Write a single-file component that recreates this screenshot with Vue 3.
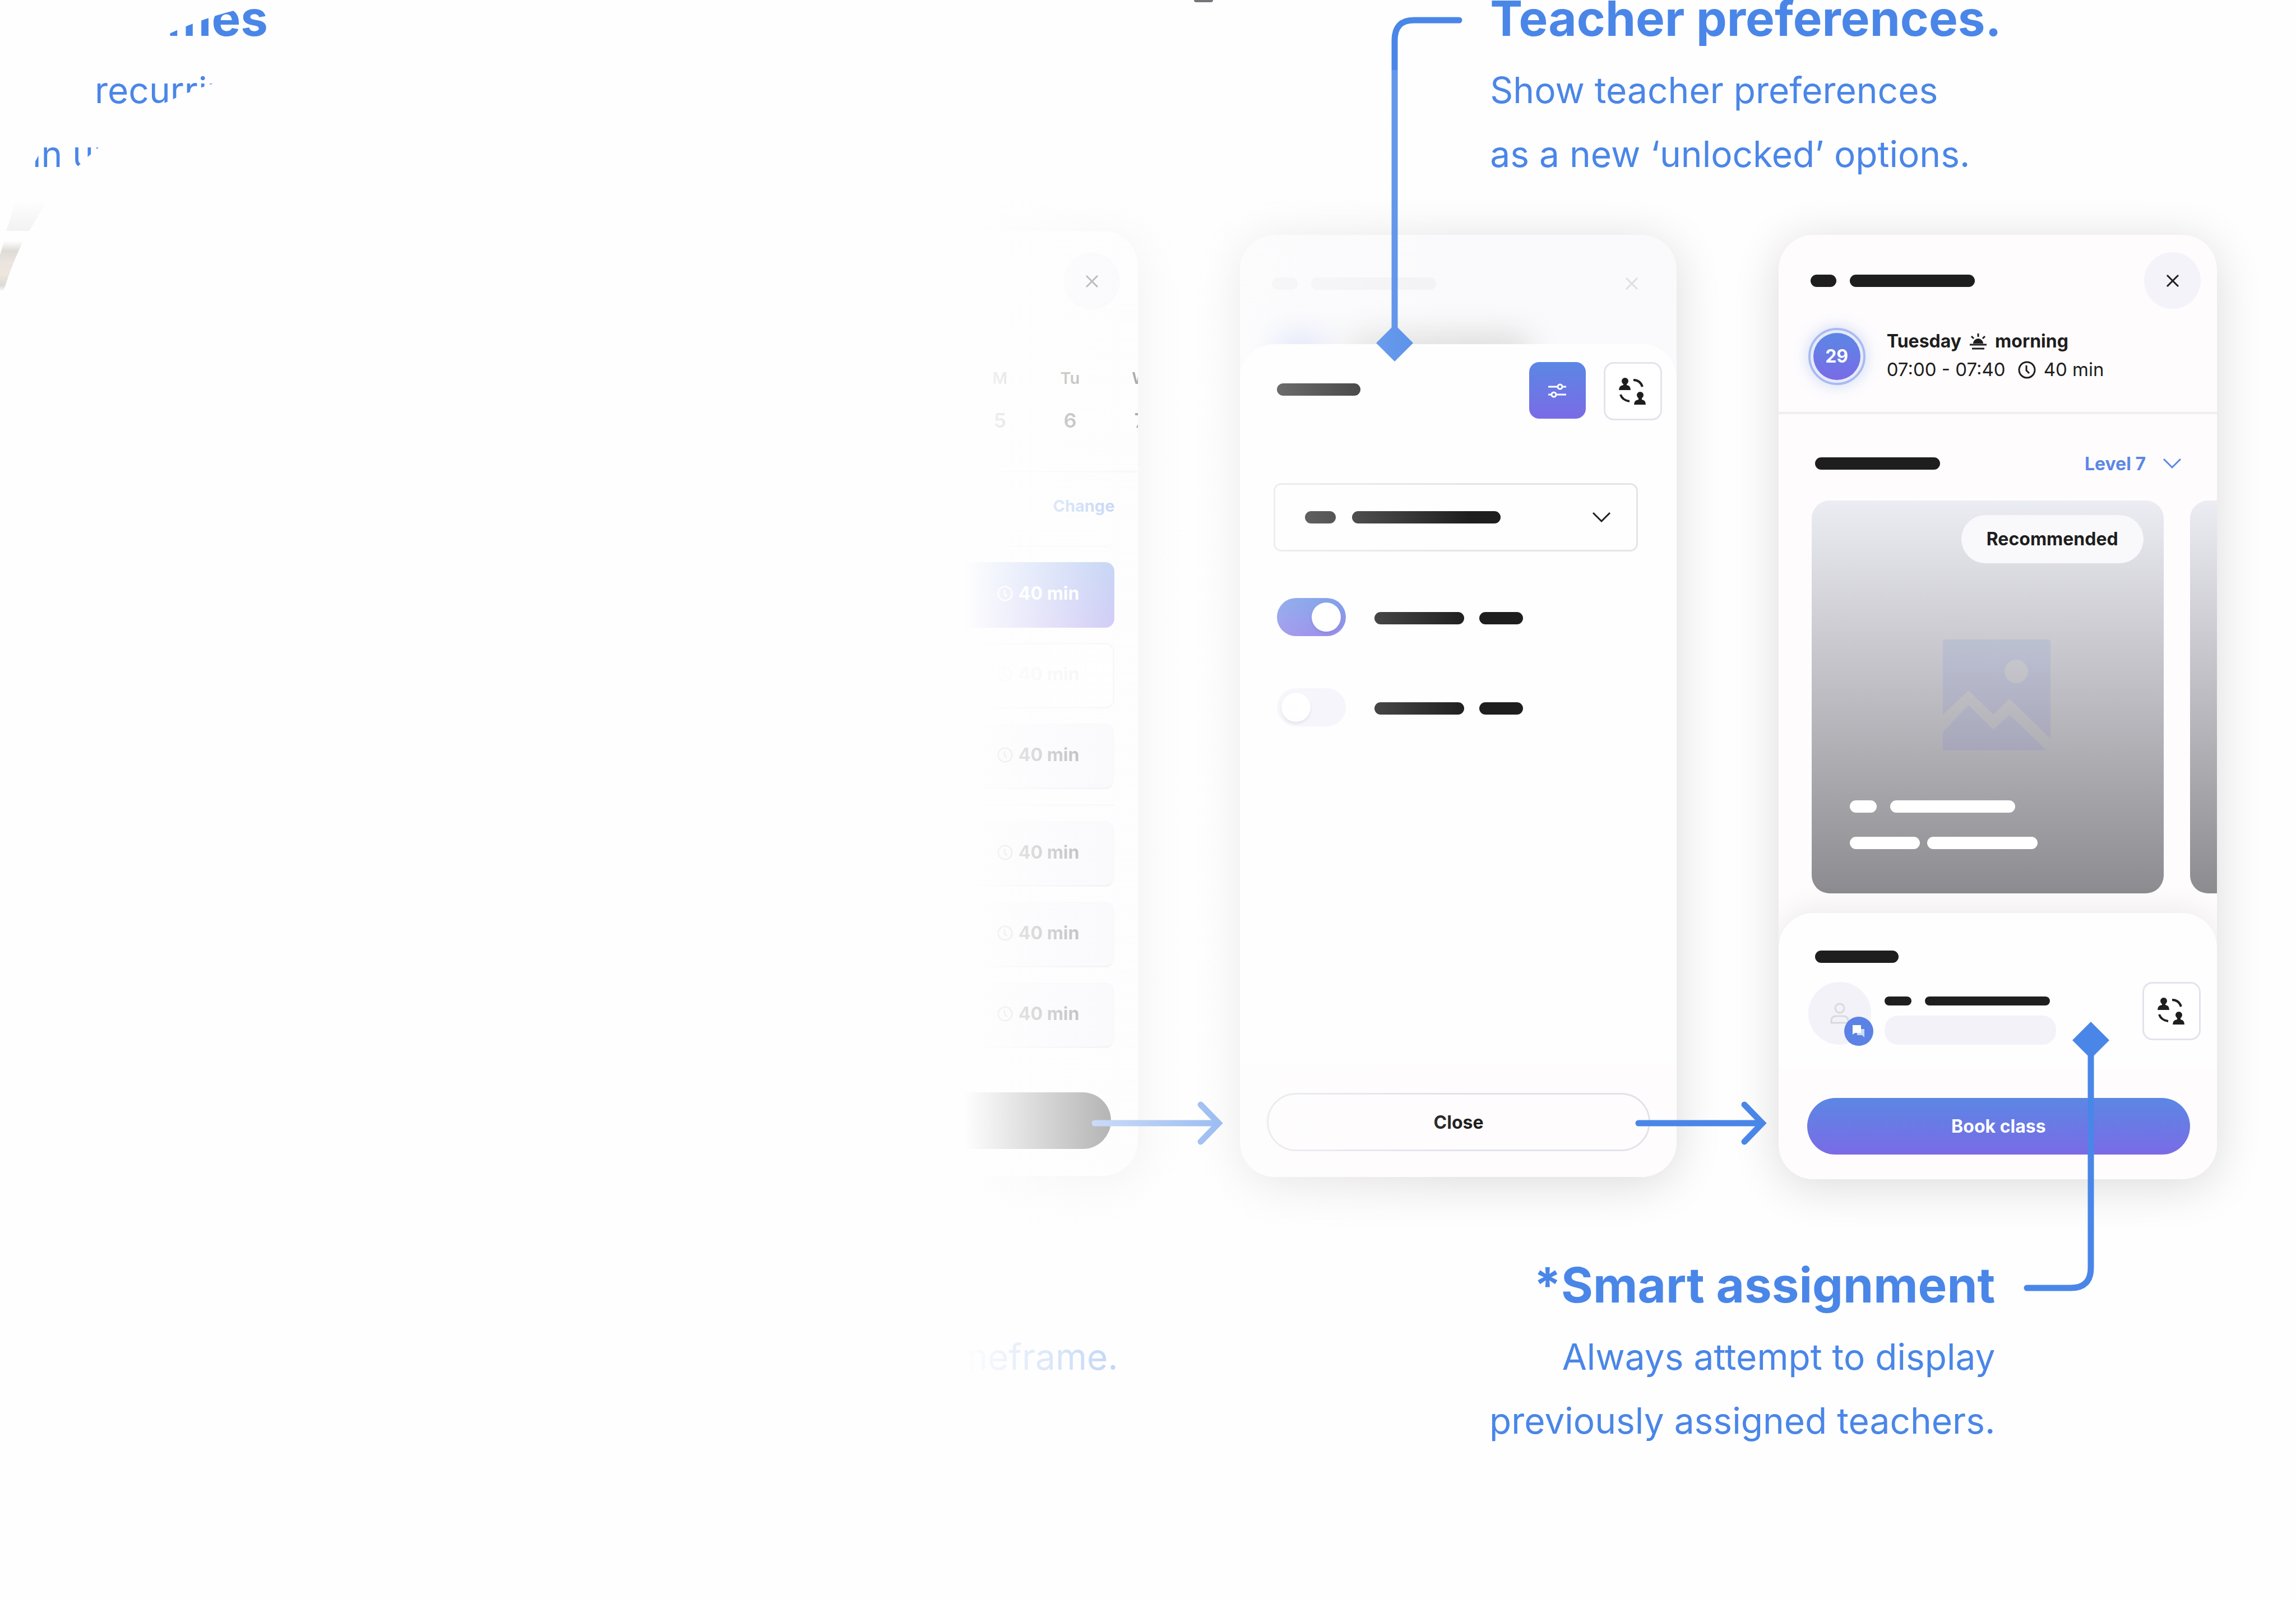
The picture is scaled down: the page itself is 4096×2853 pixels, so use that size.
<script setup>
import { ref } from 'vue'

const days = [
  { name: 'M', date: 5 },
  { name: 'Tu', date: 6 },
  { name: 'W', date: 7 },
]
const morningSlots = [
  { id: 1, kind: 'active' },
  { id: 2, kind: 'taken' },
  { id: 3, kind: 'free' },
]
const afternoonSlots = [
  { id: 4, kind: 'free' },
  { id: 5, kind: 'free' },
  { id: 6, kind: 'free' },
]
const options = ref([
  { id: 'option-a', on: true },
  { id: 'option-b', on: false },
])
</script>

<template>
  <main class="board">
    <!-- Upper captions -->
    <section class="captions captions-top">
      <div class="caption caption-preferences">
        <h2>Teacher preferences.</h2>
        <p>Show teacher preferences<br />as a new ‘unlocked’ options.</p>
      </div>
    </section>

    <!-- Screens of the booking flow -->
    <section class="screens">
      <article class="phone phone-slots">
        <header class="phone-header">
          <button class="round-button" type="button" aria-label="Close">
            <svg viewBox="0 0 24 24"><path d="M2 2L22 22M22 2L2 22" /></svg>
          </button>
        </header>
        <div class="days">
          <div v-for="day in days" :key="day.name" class="day">
            <span class="day-name">{{ day.name }}</span>
            <span class="day-date">{{ day.date }}</span>
          </div>
        </div>
        <div class="change-row"><a href="#">Change</a></div>
        <div class="slots">
          <button v-for="slot in morningSlots" :key="slot.id" type="button" class="slot" :class="slot.kind">
            <svg class="clock" viewBox="0 0 32 32"><circle cx="16" cy="16" r="14" /><path d="M15 8V17L20 22" /></svg>
            40 min
          </button>
          <hr />
          <button v-for="slot in afternoonSlots" :key="slot.id" type="button" class="slot" :class="slot.kind">
            <svg class="clock" viewBox="0 0 32 32"><circle cx="16" cy="16" r="14" /><path d="M15 8V17L20 22" /></svg>
            40 min
          </button>
        </div>
        <footer class="phone-footer">
          <button class="wide-button dark" type="button" aria-label="Continue"></button>
        </footer>
      </article>

      <article class="phone phone-preferences">
        <header class="phone-header">
          <span class="bar short"></span>
          <span class="bar long"></span>
          <button class="round-button" type="button" aria-label="Close">
            <svg viewBox="0 0 24 24"><path d="M2 2L22 22M22 2L2 22" /></svg>
          </button>
        </header>
        <div class="haze"><span class="haze-blue"></span><span class="haze-gray"></span></div>
        <div class="sheet">
          <div class="sheet-header">
            <span class="bar title"></span>
            <button class="square-button filled" type="button" aria-label="Preferences">
              <svg class="sliders" viewBox="0 0 32 26">
                <path d="M1 6H16M27 6H31M1 20H5M16 20H31" />
                <circle cx="21" cy="6" r="4" /><circle cx="10" cy="20" r="4" />
              </svg>
            </button>
            <button class="square-button" type="button" aria-label="Change teacher">
              <svg class="swap" viewBox="0 0 50 48">
                <circle cx="11" cy="6" r="6" /><path d="M8 8H14V13Q21 14 21 22H0Q0 14 8 13Z" />
                <circle cx="38" cy="31" r="6" /><path d="M35 33H41V39Q48 40 48 48H27Q27 40 35 39Z" />
                <path class="arc" d="M26 4Q38 4 42 16M3 30Q6 40 19 42" />
              </svg>
            </button>
          </div>
          <label class="picker">
            <span class="bar picker-short"></span>
            <span class="bar picker-long"></span>
            <svg class="chevron" viewBox="0 0 34 20"><path d="M2 2L17 17L32 2" /></svg>
            <select aria-label="Language"><option></option></select>
          </label>
          <label v-for="option in options" :key="option.id" class="option">
            <input v-model="option.on" type="checkbox" :name="option.id" />
            <span class="bar option-long"></span>
            <span class="bar option-short"></span>
          </label>
        </div>
        <footer class="phone-footer">
          <button class="wide-button outlined" type="button">Close</button>
        </footer>
      </article>

      <article class="phone phone-booking">
        <header class="phone-header">
          <span class="bar short"></span>
          <span class="bar long"></span>
          <button class="round-button" type="button" aria-label="Close">
            <svg viewBox="0 0 24 24"><path d="M2 2L22 22M22 2L2 22" /></svg>
          </button>
        </header>
        <div class="lesson">
          <span class="date-ring"><span class="date">29</span></span>
          <div class="lesson-text">
            <div class="lesson-line strong">
              <span>Tuesday</span>
              <svg class="sunrise" viewBox="0 0 32 30">
                <path d="M7 19A9 9 0 0 1 25 19Z" />
                <path class="rays" d="M16 7V1M8 10L4 6M24 10L28 6M1 21H31M5 28H27" />
              </svg>
              <span>morning</span>
            </div>
            <div class="lesson-line">
              <span>07:00 - 07:40</span>
              <svg class="clock" viewBox="0 0 32 32"><circle cx="16" cy="16" r="14" /><path d="M15 8V17L20 22" /></svg>
              <span>40 min</span>
            </div>
          </div>
        </div>
        <div class="level-row">
          <span class="bar level-title"></span>
          <label class="level">
            <select aria-label="Level"><option>Level 7</option></select>
            <svg class="chevron" viewBox="0 0 34 20"><path d="M2 2L17 17L32 2" /></svg>
          </label>
        </div>
        <div class="cards">
          <div class="card">
            <span class="badge">Recommended</span>
            <svg class="picture" viewBox="0 0 192 198">
              <defs>
                <linearGradient id="pictureTint" x1="0" y1="0" x2="0" y2="1">
                  <stop offset="0" stop-color="#5b87e4" /><stop offset="1" stop-color="#7a6be6" />
                </linearGradient>
              </defs>
              <g fill="url(#pictureTint)">
                <path fill-rule="evenodd" d="M4 0H188Q192 0 192 4V177L119 106L90 134L46 91L0 134V4Q0 0 4 0ZM152 57A21 21 0 1 0 110 57A21 21 0 1 0 152 57Z" />
                <path d="M0 165L46 117L90 161L119 134L185 198H0Z" />
              </g>
            </svg>
            <div class="card-lines">
              <div class="card-line"><span class="bar w48"></span><span class="bar w223 gap24"></span></div>
              <div class="card-line"><span class="bar w125"></span><span class="bar w197 gap13"></span></div>
            </div>
          </div>
          <div class="card"></div>
        </div>
        <div class="teacher-sheet">
          <span class="bar title"></span>
          <div class="teacher">
            <span class="avatar">
              <svg class="person" viewBox="0 0 34 38"><circle cx="17" cy="10" r="8" /><path d="M2 36V32Q2 24 11 24H23Q32 24 32 32V36Z" /></svg>
              <span class="chat">
                <svg viewBox="0 0 24 24"><path class="back" d="M9 8H22V23L18 19H9Z" /><path d="M1 1H16V15H5L1 18Z" /></svg>
              </span>
            </span>
            <div class="teacher-text">
              <div class="teacher-name"><span class="bar thin w48"></span><span class="bar thin w223 gap24"></span></div>
              <span class="teacher-pill"></span>
            </div>
            <button class="square-button" type="button" aria-label="Change teacher">
              <svg class="swap" viewBox="0 0 50 48">
                <circle cx="11" cy="6" r="6" /><path d="M8 8H14V13Q21 14 21 22H0Q0 14 8 13Z" />
                <circle cx="38" cy="31" r="6" /><path d="M35 33H41V39Q48 40 48 48H27Q27 40 35 39Z" />
                <path class="arc" d="M26 4Q38 4 42 16M3 30Q6 40 19 42" />
              </svg>
            </button>
          </div>
        </div>
        <footer class="phone-footer">
          <button class="wide-button primary" type="button">Book class</button>
        </footer>
      </article>
    </section>

    <!-- Lower captions -->
    <section class="captions captions-bottom">
      <div class="caption caption-timeframe"><p>timeframe.</p></div>
      <div class="caption caption-assignment">
        <h2>*Smart assignment</h2>
        <p>Always attempt to display<br />previously assigned teachers.</p>
      </div>
    </section>

    <!-- Connectors between captions and screens -->
    <svg class="connectors" viewBox="0 0 4096 2853">
      <g class="wire">
        <path d="M2603 36H2522Q2488 36 2488 72V600" />
        <path d="M1953 2004H2174M2142 1971L2174 2004L2142 2037" />
        <path d="M2923 2004H3144M3112 1971L3144 2004L3112 2037" />
        <path d="M3730 1870V2262Q3730 2298 3694 2298H3616" />
      </g>
      <path class="diamond" d="M2488 579L2521 612L2488 645L2455 612ZM3730 1823L3763 1856L3730 1889L3697 1856Z" />
    </svg>

    <div class="fade"></div>

    <!-- Remains of the previous board, seen through a curved band -->
    <aside class="previous">
      <h2>times</h2>
      <p class="previous-first">recurring</p>
      <p class="previous-second">in up</p>
      <div class="previous-shade"></div>
      <div class="previous-photo"></div>
    </aside>
    <span class="ink"></span>
  </main>
</template>

<style>
body {
  margin: 0;
  background: #fefefe;
}
</style>

<style scoped>
* {
  box-sizing: border-box;
}
.board {
  position: relative;
  min-height: 100vh;
  overflow: hidden;
  background: #fefefe;
  color: #1e1e1e;
  font-family: Inter, "Liberation Sans", sans-serif;
  font-size: 32px;
}
button,
select {
  margin: 0;
  padding: 0;
  border: 0;
  background: none;
  color: inherit;
  font: inherit;
}
button {
  display: flex;
  align-items: center;
  justify-content: center;
  flex: none;
}
svg {
  display: block;
  flex: none;
  fill: none;
  stroke: none;
}
h2,
p {
  margin: 0;
  color: #4a86e8;
  white-space: nowrap;
}
h2 {
  font-size: 87px;
  font-weight: 700;
  line-height: 66px;
}
p {
  font-size: 64px;
  line-height: 114px;
}
.caption {
  display: flex;
  flex-direction: column;
  gap: 38px;
}
.captions-top {
  display: flex;
  height: 412px;
  padding-left: 64.9%;
}
.captions-bottom {
  display: grid;
  grid-template-columns: 48.7% 38.2%;
  padding: 156px 0 200px;
  text-align: right;
}
.caption-timeframe {
  padding-top: 104px;
}

/* Phones */
.screens {
  display: flex;
  justify-content: flex-end;
  gap: 182px;
}
.phone {
  display: flex;
  flex: 0 0 19%;
  flex-direction: column;
  overflow: hidden;
  border-radius: 62px;
  background: #fefcfd;
  box-shadow: 0 12px 84px rgba(0, 0, 0, 0.14);
}
.phone-slots {
  margin-bottom: 6px;
}
.phone-preferences {
  margin: 7px 0 4px;
  background: #fafafc;
}
.phone-booking {
  flex-basis: 19.1%;
  margin: 7px 141px 0 0;
}
.phone-header {
  display: flex;
  align-items: center;
  gap: 24px;
  padding: 31px 29px 0 57px;
}
.phone-slots .phone-header {
  padding: 39px 32px 0 57px;
}
.phone-preferences .phone-header {
  padding-top: 36px;
}
.bar {
  display: block;
  flex: none;
  height: 22px;
  border-radius: 11px;
  background: #1e1e1e;
}
.bar.short {
  width: 46px;
}
.bar.long {
  width: 223px;
}
.bar.title {
  width: 149px;
}
.bar.thin {
  height: 16px;
  border-radius: 8px;
}
.w48 {
  width: 48px;
}
.w125 {
  width: 125px;
}
.w197 {
  width: 197px;
}
.w223 {
  width: 223px;
}
.gap24 {
  margin-left: 24px;
}
.gap13 {
  margin-left: 13px;
}
.phone-preferences .phone-header .bar {
  background: #f2f2f4;
}
.round-button {
  width: 101px;
  height: 101px;
  margin-left: auto;
  border-radius: 50%;
  background: #f3f3f9;
}
.round-button svg {
  width: 24px;
  height: 24px;
  stroke: #1e1e1e;
  stroke-width: 3;
}
.phone-preferences .round-button {
  background: none;
}
.phone-preferences .round-button svg {
  stroke: #dfdfe3;
}
.phone-footer {
  padding: 53px 48px 44px 51px;
}
.wide-button {
  width: 100%;
  height: 101px;
  border-radius: 51px;
  font-weight: 700;
}
.dark {
  background: #1e1e1e;
}
.outlined {
  height: 104px;
  border: 3px solid #e2e2ea;
  border-radius: 52px;
}
.primary {
  background: linear-gradient(#5b87e4, #7a6be6);
  color: #fff;
}
.square-button {
  width: 104px;
  height: 104px;
  border: 3px solid #e4e3ec;
  border-radius: 18px;
  background: #fff;
}
.filled {
  width: 101px;
  height: 101px;
  border: 0;
  background: linear-gradient(#5b87e4, #7a6be6);
}
.sliders {
  width: 32px;
  height: 26px;
  stroke: #fff;
  stroke-width: 3;
  stroke-linecap: round;
}
.swap {
  width: 50px;
  height: 48px;
  fill: #1e1e1e;
}
.swap .arc {
  fill: none;
  stroke: #1e1e1e;
  stroke-width: 4;
}
.chevron {
  width: 34px;
  height: 20px;
  stroke: currentColor;
  stroke-width: 3;
}
.clock {
  width: 32px;
  height: 32px;
  stroke: currentColor;
  stroke-width: 3;
}

/* Time slots */
.days {
  display: flex;
  justify-content: flex-end;
  height: 291px;
  margin-right: -66px;
  padding-top: 103px;
  border-bottom: 3px solid #f3eff1;
}
.day {
  display: flex;
  flex: none;
  flex-direction: column;
  gap: 35px;
  width: 125px;
  line-height: 40px;
  text-align: center;
}
.day-name {
  font-size: 29px;
  font-weight: 600;
}
.day-date {
  font-size: 36px;
  font-weight: 600;
}
.change-row {
  margin: 0 42px;
  padding: 39px 0 50px;
  border-bottom: 3px solid #f0f0f2;
  border-radius: 0 0 16px 16px;
  line-height: 40px;
  text-align: right;
}
.change-row a {
  color: #5b8fe8;
  font-size: 29px;
  font-weight: 700;
  text-decoration: none;
}
.slots {
  display: flex;
  flex-direction: column;
  gap: 27px;
  padding: 27px 42px 0;
}
.slots hr {
  width: 100%;
  height: 3px;
  margin: 0;
  border: 0;
  background: #efeff2;
}
.slot {
  justify-content: flex-end;
  gap: 10px;
  height: 117px;
  padding: 0 60px 6px 0;
  border: 3px solid #f0f0f8;
  border-radius: 16px;
  background: #f1f1fa;
  font-weight: 700;
}
.slot .clock {
  width: 28px;
  height: 28px;
  opacity: 0.6;
}
.slot.free {
  border-bottom-color: #dddde8;
}
.slot.active {
  border-color: transparent;
  background: linear-gradient(#5b87e4, #7a6be6) border-box;
  color: #fff;
}
.slot.taken {
  border-color: #ececf2;
  background: #fff;
  color: #e4e4ee;
}
.slot.taken .clock,
.slot.active .clock {
  opacity: 1;
}
.phone-slots .phone-footer {
  margin-top: auto;
  padding-bottom: 48px;
}

/* Preferences */
.haze {
  position: relative;
  height: 58px;
}
.haze-blue,
.haze-gray {
  position: absolute;
  top: 40px;
  height: 60px;
  border-radius: 30px;
  filter: blur(26px);
}
.haze-blue {
  left: 60px;
  width: 96px;
  background: #d3d9f7;
}
.haze-gray {
  left: 190px;
  width: 330px;
  background: #dcdcdc;
}
.sheet {
  position: relative;
  flex: 1;
  padding: 32px 0 0;
  border-radius: 62px 62px 0 0;
  background: #fefefe;
}
.sheet-header {
  display: flex;
  align-items: flex-start;
  gap: 32px;
  padding: 0 26px 0 66px;
}
.sheet-header .bar {
  margin: 38px auto 0 0;
}
.picker {
  position: relative;
  display: flex;
  align-items: center;
  height: 122px;
  margin: 112px 69px 0 60px;
  padding: 0 45px 0 53px;
  border: 3px solid #e4e4ea;
  border-radius: 14px;
}
.picker-short {
  width: 55px;
}
.picker-long {
  width: 265px;
  margin-left: 29px;
}
.picker .chevron {
  margin-left: auto;
}
.picker select {
  position: absolute;
  inset: 0;
  width: 100%;
  appearance: none;
}
.option {
  display: flex;
  align-items: center;
  margin: 93px 0 0 66px;
}
.picker + .option {
  margin-top: 83px;
}
.option input {
  flex: none;
  width: 123px;
  height: 68px;
  margin: 0 51px 0 0;
  appearance: none;
  border-radius: 34px;
  background: #f3f2fa;
}
.option input::before {
  content: "";
  display: block;
  width: 52px;
  height: 52px;
  margin: 8px;
  border-radius: 50%;
  background: #fff;
  box-shadow: 0 3px 5px rgba(0, 0, 0, 0.12);
}
.option input:checked {
  background: linear-gradient(#5b87e4, #7a6be6);
}
.option input:checked::before {
  margin-left: 62px;
}
.option .bar {
  margin-top: 4px;
}
.option-long {
  width: 160px;
}
.option-short {
  width: 78px;
  margin-left: 27px;
}
.phone-preferences .phone-footer {
  padding: 49px 47px 46px 48px;
  background: #fefcfd;
}

/* Booking */
.lesson {
  display: flex;
  align-items: center;
  gap: 38px;
  padding: 32px 53px 46px;
  border-bottom: 4px solid #efeff0;
}
.date-ring {
  display: flex;
  padding: 5px;
  border: 4px solid #a9baf0;
  border-radius: 50%;
  background: #e6ebfc;
  box-shadow: 0 0 28px rgba(91, 135, 228, 0.3);
}
.date {
  width: 84px;
  border-radius: 50%;
  background: linear-gradient(#5b87e4, #7a6be6);
  color: #fff;
  font-weight: 700;
  line-height: 84px;
  text-align: center;
}
.lesson-text {
  padding-bottom: 4px;
  font-size: 33px;
}
.lesson-line {
  display: flex;
  align-items: center;
  line-height: 51px;
  white-space: nowrap;
}
.lesson-line svg {
  margin: 0 14px 0 22px;
}
.lesson-line.strong {
  font-size: 32px;
  font-weight: 700;
}
.lesson-line.strong svg {
  margin-left: 14px;
}
.sunrise {
  width: 32px;
  height: 30px;
  fill: #1e1e1e;
}
.sunrise .rays {
  stroke: #1e1e1e;
  stroke-width: 3;
}
.level-row {
  display: flex;
  align-items: center;
  justify-content: space-between;
  height: 60px;
  margin-top: 58px;
  padding: 0 63px 0 65px;
}
.level-title {
  width: 223px;
}
.level {
  display: flex;
  align-items: center;
  gap: 30px;
  color: #5b87e6;
  font-weight: 700;
}
.level select {
  appearance: none;
  field-sizing: content;
}
.cards {
  display: flex;
  gap: 47px;
  height: 701px;
  margin-top: 36px;
  padding-left: 59px;
}
.card {
  display: flex;
  flex: 0 0 628px;
  flex-direction: column;
  padding: 26px 36px 79px 68px;
  border-radius: 32px;
  background: linear-gradient(#ececf3, #8c8c90);
}
.badge {
  align-self: flex-end;
  height: 86px;
  padding: 0 45px;
  border-radius: 43px;
  background: #f9f9fb;
  font-weight: 700;
  line-height: 86px;
}
.picture {
  width: 192px;
  height: 198px;
  margin: 136px 0 0 166px;
  opacity: 0.12;
}
.card-lines {
  display: flex;
  flex-direction: column;
  gap: 43px;
  margin-top: auto;
}
.card-line,
.teacher-name {
  display: flex;
}
.card .bar {
  background: #fff;
}
.teacher-sheet {
  position: relative;
  margin-top: 35px;
  padding: 67px 29px 42px 53px;
  border-radius: 62px 62px 0 0;
  background: #fefefe;
  box-shadow: 0 -8px 50px rgba(0, 0, 0, 0.07);
}
.teacher-sheet .title {
  margin-left: 12px;
}
.teacher {
  display: flex;
  align-items: flex-end;
  margin-top: 34px;
}
.avatar {
  position: relative;
  display: flex;
  align-items: center;
  justify-content: center;
  flex: none;
  width: 112px;
  height: 112px;
  border-radius: 50%;
  background: #f3f2f9;
}
.person {
  width: 34px;
  height: 38px;
  stroke: #d9d9de;
  stroke-width: 3;
}
.chat {
  position: absolute;
  right: -4px;
  bottom: -2px;
  display: flex;
  align-items: center;
  justify-content: center;
  width: 52px;
  height: 52px;
  border-radius: 50%;
  background: #5b82e4;
}
.chat svg {
  width: 24px;
  height: 24px;
  fill: #fff;
}
.chat .back {
  opacity: 0.7;
}
.teacher-text {
  margin: 0 auto 0 24px;
}
.teacher-pill {
  display: block;
  width: 306px;
  height: 52px;
  margin-top: 18px;
  border-radius: 24px;
  background: #f3f2f9;
}
.teacher .square-button {
  align-self: flex-start;
}
.phone-booking .phone-footer {
  position: relative;
  background: #fefcfd;
}

/* Overlays */
.connectors {
  position: absolute;
  top: 0;
  left: 0;
  width: 100%;
  pointer-events: none;
}
.wire {
  stroke: #4a86e8;
  stroke-width: 11;
  stroke-linecap: round;
}
.diamond {
  fill: #4a86e8;
}
.fade {
  position: absolute;
  inset: 125px 0 0;
  pointer-events: none;
  background: linear-gradient(
    90deg,
    #fefefe 42%,
    rgba(254, 254, 254, 0.69) 48%,
    rgba(254, 254, 254, 0.33) 56%,
    rgba(254, 254, 254, 0.13) 61%,
    rgba(254, 254, 254, 0) 64%
  );
}
.previous {
  position: absolute;
  top: 0;
  left: 0;
  width: 478px;
  height: 520px;
  clip-path: path("M0 455L7 431L11 412L29 357Q46 318 69 277Q140 140 290 66Q350 36 417 19L478 8V110Q430 128 383 148Q340 162 293 184Q200 236 143 293Q108 326 82 362Q52 412 40 433Q22 470 7 517L0 520Z");
}
.previous h2 {
  margin-bottom: 38px;
  text-align: right;
}
.previous-first {
  margin-left: 169px;
}
.previous-second {
  margin-left: 58px;
}
.previous-shade {
  height: 54px;
  margin-top: 26px;
  background: linear-gradient(#fefefe, #f2f2f2);
}
.previous-photo {
  width: 60px;
  height: 90px;
  margin-top: 18px;
  background: linear-gradient(#fefefe, #dedbd6 20%, #ebe4df 42%, #eee7de 64%, #dcdad7 88%, #fefefe);
}
.ink {
  position: absolute;
  top: 0;
  left: 52%;
  width: 34px;
  height: 4px;
  border-radius: 0 0 17px 17px;
  background: #77757a;
}
</style>
